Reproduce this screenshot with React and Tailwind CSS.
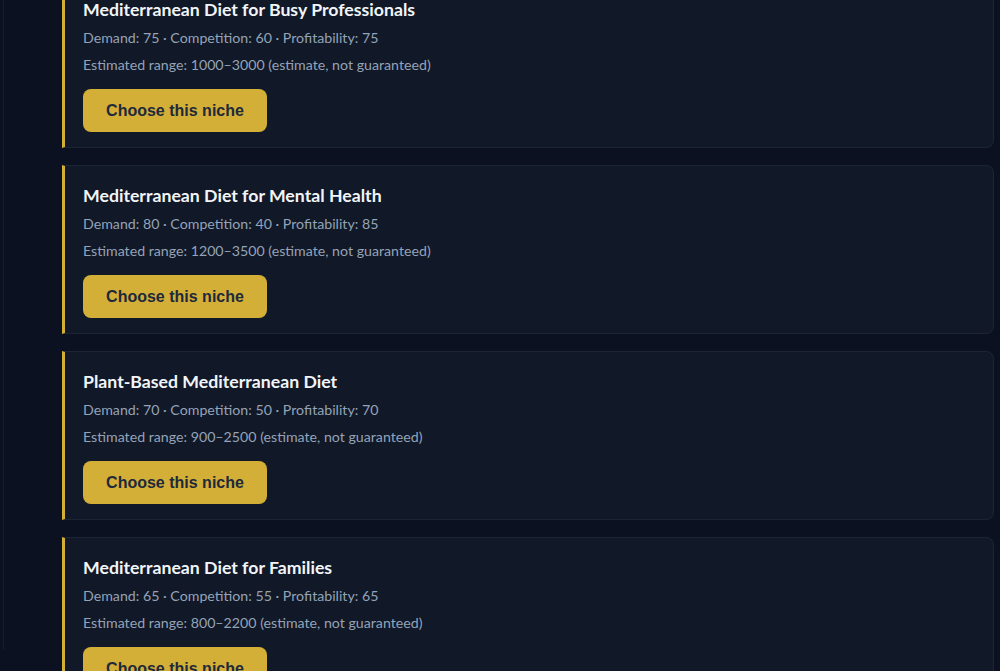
import React from 'react';

const niches = [
  { title: 'Mediterranean Diet for Busy Professionals', demand: 75, competition: 60, profitability: 75, range: '1000–3000' },
  { title: 'Mediterranean Diet for Mental Health', demand: 80, competition: 40, profitability: 85, range: '1200–3500' },
  { title: 'Plant-Based Mediterranean Diet', demand: 70, competition: 50, profitability: 70, range: '900–2500' },
  { title: 'Mediterranean Diet for Families', demand: 65, competition: 55, profitability: 65, range: '800–2200' },
];

const NicheCard = ({ niche }) => (
  <div className="bg-[#111827] border border-[#1c2535] border-l-[3px] border-l-[#d4af37] rounded-r-lg pl-[18px] pr-5 pt-[18px] pb-[15px] font-['Lato',sans-serif]">
    <h3 className="text-[#f1f5f9] text-[17.7px] font-bold leading-6">{niche.title}</h3>
    <p className="text-[#94a3b8] text-[14.2px] leading-[22px] mt-[5px]">
      Demand: {niche.demand} · Competition: {niche.competition} · Profitability: {niche.profitability}
    </p>
    <p className="text-[#94a3b8] text-[14.2px] leading-[22px] mt-[5px]">
      Estimated range: {niche.range} (estimate, not guaranteed)
    </p>
    <button className="mt-[13px] h-[43px] w-[184px] rounded-lg bg-[#d4af37] text-[#1e293b] text-base font-bold font-['Liberation_Sans',Arial,sans-serif]">
      Choose this niche
    </button>
  </div>
);

export default function App() {
  return (
    <div className="h-screen overflow-hidden bg-[#0b1120]">
      <div className="h-full ml-[3px] border-l border-[#151d2c] pl-[58px] pr-[6px]">
        <div className="flex flex-col gap-[17px] -mt-[21px]">
          {niches.map((n) => (
            <NicheCard key={n.title} niche={n} />
          ))}
        </div>
      </div>
    </div>
  );
}
